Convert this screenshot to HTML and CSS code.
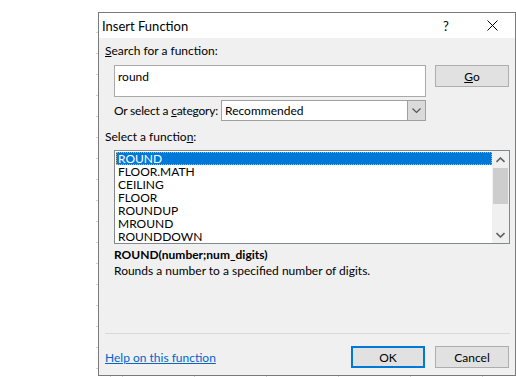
FILE: index.html
```html
<!DOCTYPE html>
<html lang="en">
<head>
    <meta charset="UTF-8">
    <title>Insert Function</title>
    <link rel="stylesheet" href="styles.css">
</head>
<body>

<div class="screen">
    <div class="sheet-edge"></div>

    <div class="dialog">
        <div class="titlebar">
            <span class="title">Insert Function</span>
            <span class="title-btn">?</span>
            <span class="title-btn">
                <svg width="11" height="11" viewBox="0 0 11 11"><path d="M0.5 0.5 L10.5 10.5 M10.5 0.5 L0.5 10.5" stroke="#000" stroke-width="1"/></svg>
            </span>
        </div>

        <div class="content">
            <div class="label"><u>S</u>earch for a function:</div>

            <div class="search-row">
                <div class="search-box">round</div>
                <button class="btn"><u>G</u>o</button>
            </div>

            <div class="category-row">
                <span class="category-label">Or select a <u>c</u>ategory:</span>
                <div class="select">
                    <span class="select-text">Recommended</span>
                    <span class="select-arrow">
                        <svg width="9" height="6" viewBox="0 0 9 6"><path d="M0.5 0.5 L4.5 4.5 L8.5 0.5" fill="none" stroke="#555" stroke-width="1.2"/></svg>
                    </span>
                </div>
            </div>

            <div class="label list-label">Select a functio<u>n</u>:</div>

            <div class="listbox">
                <div class="items">
                    <div class="item selected">ROUND</div>
                    <div class="item">FLOOR.MATH</div>
                    <div class="item">CEILING</div>
                    <div class="item">FLOOR</div>
                    <div class="item">ROUNDUP</div>
                    <div class="item">MROUND</div>
                    <div class="item">ROUNDDOWN</div>
                </div>
                <div class="scrollbar">
                    <span class="arrow">
                        <svg width="9" height="6" viewBox="0 0 9 6"><path d="M0.5 5 L4.5 1 L8.5 5" fill="none" stroke="#606060" stroke-width="1.6"/></svg>
                    </span>
                    <span class="thumb"></span>
                    <span class="track"></span>
                    <span class="arrow">
                        <svg width="9" height="6" viewBox="0 0 9 6"><path d="M0.5 1 L4.5 5 L8.5 1" fill="none" stroke="#606060" stroke-width="1.6"/></svg>
                    </span>
                </div>
            </div>

            <div class="signature">ROUND(number;num_digits)</div>
            <div class="description">Rounds a number to a specified number of digits.</div>

            <div class="separator"></div>

            <div class="footer">
                <a class="help" href="#">Help on this function</a>
                <div class="footer-buttons">
                    <button class="btn default">OK</button>
                    <button class="btn">Cancel</button>
                </div>
            </div>
        </div>
    </div>
</div>

</body>
</html>
```

FILE: styles.css
```css
html, body {
    margin: 0;
    width: 516px;
    height: 377px;
    overflow: hidden;
    background-color: white;
}

body {
    font-family: Lato, "Noto Sans", sans-serif;
    font-size: 12px;
    color: #000;
}

.screen {
    display: flex;
    height: 377px;
    padding-top: 12px;
    box-sizing: border-box;
    /* column gridlines of the sheet just below the dialog */
    background-image: repeating-linear-gradient(to right, #d4d4d4 0 1px, transparent 1px 72px);
    background-size: 100% 1px;
    background-position: 122px bottom;
    background-repeat: repeat-x;
}

.sheet-edge {
    width: 98px;
    flex-shrink: 0;
    background: white repeating-linear-gradient(to bottom, transparent 0 20px, #d4d4d4 20px 21px) right top / 2px 100% no-repeat;
}

.dialog {
    width: 416px;
    height: 362px;
    flex-shrink: 0;
    border: 1px solid #7a7a7a;
    background-color: #f0f0f0;
    display: flex;
    flex-direction: column;
}

.titlebar {
    height: 25px;
    background-color: white;
    display: flex;
    align-items: center;
    flex-shrink: 0;
}

.title {
    flex: 1;
    padding-left: 3px;
    font-size: 13px;
}

.title-btn {
    width: 46px;
    height: 25px;
    display: flex;
    align-items: center;
    justify-content: center;
    font-size: 13px;
}

.content {
    flex: 1;
    display: flex;
    flex-direction: column;
    padding: 6px 5px 7px 6px;
}

.label {
    line-height: 14px;
}

.search-row {
    display: flex;
    gap: 9px;
    margin: 7px 0 0 9px;
    align-items: flex-start;
}

.search-box {
    width: 304px;
    height: 22px;
    border: 1px solid #a9a9a9;
    background-color: white;
    padding: 4px 3px;
    line-height: 14px;
}

.btn {
    width: 74px;
    height: 22px;
    border: 1px solid #adadad;
    background-color: #e1e1e1;
    font-family: inherit;
    font-size: 12px;
    padding: 0;
    color: #000;
}

.btn.default {
    border: 2px solid #0078d7;
}

.category-row {
    display: flex;
    align-items: center;
    margin: 3px 0 0 9px;
}

.category-label {
    width: 107px;
    white-space: nowrap;
    letter-spacing: -0.2px;
}

.select {
    width: 203px;
    height: 19px;
    border: 1px solid #a0a0a0;
    background-color: white;
    display: flex;
    align-items: center;
}

.select-text {
    flex: 1;
    padding-left: 3px;
}

.select-arrow {
    width: 17px;
    height: 19px;
    background-color: #dadada;
    border-left: 1px solid #a0a0a0;
    display: flex;
    align-items: center;
    justify-content: center;
}

.list-label {
    margin-top: 9px;
}

.listbox {
    margin: 6px 0 0 9px;
    height: 92px;
    border: 1px solid #828790;
    background-color: white;
    display: flex;
}

.items {
    flex: 1;
    padding: 1px 0 0 1px;
}

.item {
    height: 13px;
    line-height: 13px;
    padding-left: 2px;
}

.item.selected {
    background-color: #0078d7;
    color: white;
    outline: 1px dotted #f7a23a;
    outline-offset: -1px;
}

.scrollbar {
    width: 17px;
    background-color: #f0f0f0;
    display: flex;
    flex-direction: column;
}

.arrow {
    height: 17px;
    display: flex;
    align-items: center;
    justify-content: center;
}

.thumb {
    height: 36px;
    margin: 0 1px;
    background-color: #cdcdcd;
}

.track {
    flex: 1;
}

.signature {
    margin: 4px 0 0 9px;
    font-weight: bold;
    line-height: 14px;
}

.description {
    margin: 2px 0 0 9px;
    line-height: 14px;
}

.separator {
    margin-top: auto;
    height: 1px;
    background-color: #d9d9d9;
}

.footer {
    display: flex;
    justify-content: space-between;
    align-items: center;
    margin-top: 12px;
}

.help {
    color: #0066cc;
}

.footer-buttons {
    display: flex;
    gap: 10px;
    margin-right: 1px;
}
```
